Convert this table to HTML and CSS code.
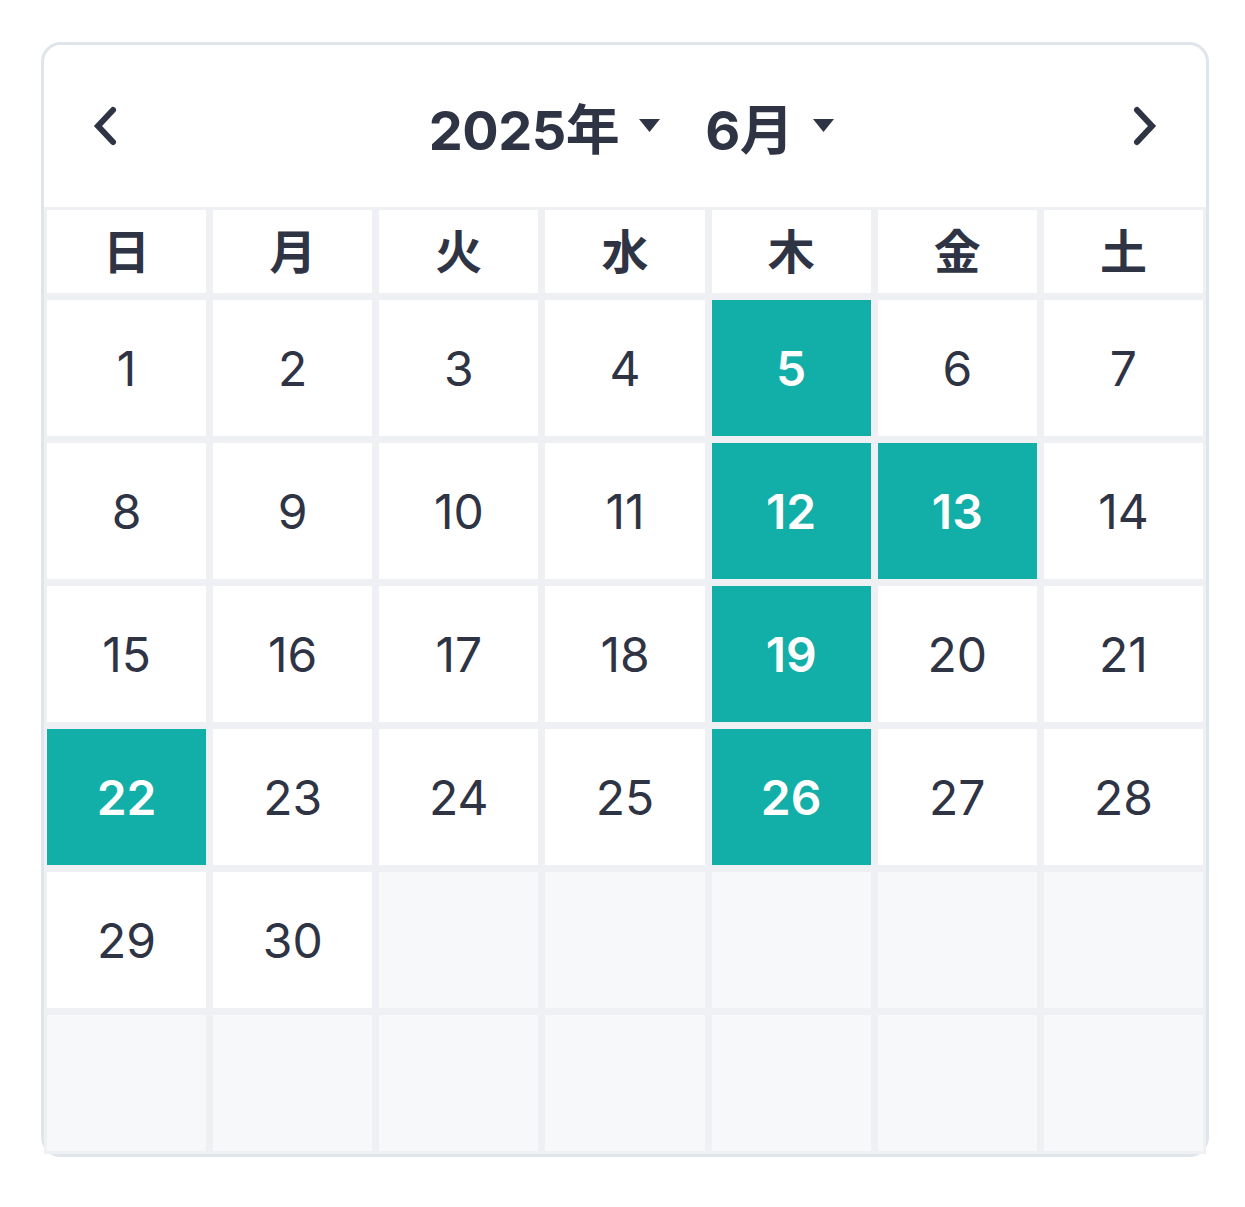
FILE: index.html
```html
<!DOCTYPE html>
<html lang="ja">
<head>
<meta charset="utf-8">
<link rel="stylesheet" href="styles.css">
</head>
<body>
<div class="card">
  <div class="head">
    <button class="nav" aria-label="前月">
      <svg width="28" height="42" viewBox="0 0 28 42"><path d="M22 5 L7 21 L22 37" fill="none" stroke="#2f3445" stroke-width="6" stroke-linecap="round" stroke-linejoin="miter"/></svg>
    </button>
    <div class="title">
      <span class="sel">2025年<svg class="caret" width="23" height="15" viewBox="0 0 23 15"><path d="M1 1 H22 L11.5 14 Z" fill="#2f3445"/></svg></span>
      <span class="sel">6月<svg class="caret" width="23" height="15" viewBox="0 0 23 15"><path d="M1 1 H22 L11.5 14 Z" fill="#2f3445"/></svg></span>
    </div>
    <button class="nav" aria-label="翌月">
      <svg width="28" height="42" viewBox="0 0 28 42"><path d="M6 5 L21 21 L6 37" fill="none" stroke="#2f3445" stroke-width="6" stroke-linecap="round" stroke-linejoin="miter"/></svg>
    </button>
  </div>
  <div class="grid">
    <div class="wd">日</div><div class="wd">月</div><div class="wd">火</div><div class="wd">水</div><div class="wd">木</div><div class="wd">金</div><div class="wd">土</div>
    <div class="d">1</div><div class="d">2</div><div class="d">3</div><div class="d">4</div><div class="d on">5</div><div class="d">6</div><div class="d">7</div>
    <div class="d">8</div><div class="d">9</div><div class="d">10</div><div class="d">11</div><div class="d on">12</div><div class="d on">13</div><div class="d">14</div>
    <div class="d">15</div><div class="d">16</div><div class="d">17</div><div class="d">18</div><div class="d on">19</div><div class="d">20</div><div class="d">21</div>
    <div class="d on">22</div><div class="d">23</div><div class="d">24</div><div class="d">25</div><div class="d on">26</div><div class="d">27</div><div class="d">28</div>
    <div class="d">29</div><div class="d">30</div><div class="d empty"></div><div class="d empty"></div><div class="d empty"></div><div class="d empty"></div><div class="d empty"></div>
    <div class="d empty"></div><div class="d empty"></div><div class="d empty"></div><div class="d empty"></div><div class="d empty"></div><div class="d empty"></div><div class="d empty"></div>
  </div>
</div>
</body>
</html>
```
FILE: styles.css
```css
html, body {
  margin: 0;
  padding: 0;
  background: #ffffff;
}
body {
  font-family: Inter, "Noto Sans CJK JP", sans-serif;
  color: #2f3445;
}
.card {
  box-sizing: border-box;
  width: 1168px;
  margin: 42px 0 0 41px;
  border: 3px solid #e0e4eb;
  border-radius: 20px;
  background: #ffffff;
}
.head {
  height: 162px;
  box-sizing: border-box;
  padding: 0 47px 0 47px;
  display: flex;
  align-items: center;
  justify-content: space-between;
}
.nav {
  border: 0;
  background: none;
  padding: 0;
  width: 28px;
  height: 42px;
  display: flex;
  align-items: center;
  justify-content: center;
  cursor: pointer;
}
.title {
  display: flex;
  align-items: center;
  gap: 44px;
  padding-left: 14px;
  font-size: 54px;
  font-weight: 700;
  letter-spacing: -0.5px;
}
.sel {
  display: flex;
  align-items: center;
  gap: 19px;
}
.caret {
  margin-top: -2px;
}
.grid {
  display: grid;
  grid-template-columns: repeat(7, 1fr);
  grid-template-rows: 83px repeat(6, 136px);
  gap: 7px;
  padding: 3px;
  background: #eef0f4;
}
.wd {
  background: #ffffff;
  display: flex;
  align-items: center;
  justify-content: center;
  padding-bottom: 6px;
  font-size: 47px;
  font-weight: 700;
  font-family: "Noto Sans CJK JP", sans-serif;
}
.d {
  background: #ffffff;
  display: flex;
  align-items: center;
  justify-content: center;
  font-size: 48px;
  font-weight: 400;
}
.d.on {
  background: #12aea8;
  color: #ffffff;
  font-weight: 600;
}
.d.empty {
  background: #f7f8fa;
}
```
